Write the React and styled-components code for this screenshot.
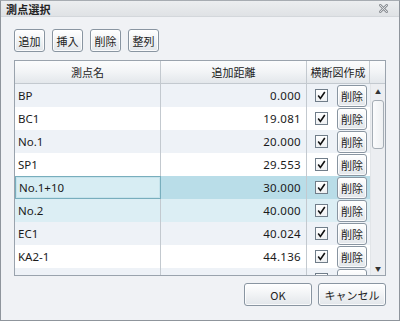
import React from 'react';
import styled, { createGlobalStyle } from 'styled-components';

const rows = [
  { name: 'BP', dist: '0.000' },
  { name: 'BC1', dist: '19.081' },
  { name: 'No.1', dist: '20.000' },
  { name: 'SP1', dist: '29.553' },
  { name: 'No.1+10', dist: '30.000', state: 'selected' },
  { name: 'No.2', dist: '40.000', state: 'hover' },
  { name: 'EC1', dist: '40.024' },
  { name: 'KA2-1', dist: '44.136' },
  { name: 'KE2-1', dist: '49.136' },
];

const GlobalStyle = createGlobalStyle`
  html, body { margin: 0; padding: 0; background: #fff; }
  * { box-sizing: border-box; }
  body {
    font-family: "Noto Sans CJK JP", "Noto Sans", sans-serif;
    font-size: 11px;
    color: #1a1a1a;
  }
`;

const CloseIcon = () => (
  <svg width='9' height='9' viewBox='0 0 9 9'>
    <path d='M1 1 L8 8 M8 1 L1 8' stroke='#8e9297' strokeWidth='2.6' strokeLinecap='square' />
    <path d='M1 1 L8 8 M8 1 L1 8' stroke='#e6e8eb' strokeWidth='0.9' strokeLinecap='square' />
  </svg>
);

const Check = () => (
  <svg width='11' height='11' viewBox='0 0 11 11'>
    <path d='M2.2 5.6 L4.4 8.4 L8.8 2' fill='none' stroke='#111' strokeWidth='1.6' />
  </svg>
);

const App = () => {
  return (
    <>
      <GlobalStyle />
      <Window>
        <TitleBar>
          <span className='title'>測点選択</span>
          <CloseIcon />
        </TitleBar>
        <Body>
          <Toolbar>
            <SmallButton>追加</SmallButton>
            <SmallButton>挿入</SmallButton>
            <SmallButton>削除</SmallButton>
            <SmallButton>整列</SmallButton>
          </Toolbar>

          <Grid>
            <HeaderRow>
              <HeaderCell>測点名</HeaderCell>
              <HeaderCell>追加距離</HeaderCell>
              <HeaderCell>横断図作成</HeaderCell>
              <HeaderCell $last />
            </HeaderRow>
            <GridBody>
              <Rows>
                {rows.map((r, i) => (
                  <Row key={r.name} $odd={i % 2 === 0} $state={r.state}>
                    <NameCell $focus={r.state === 'selected'}>{r.name}</NameCell>
                    <DistCell>{r.dist}</DistCell>
                    <ActionCell>
                      <CheckBox>
                        <Check />
                      </CheckBox>
                      <RowButton>削除</RowButton>
                    </ActionCell>
                  </Row>
                ))}
              </Rows>
              <ScrollBar>
                <Arrow>▲</Arrow>
                <Track>
                  <Thumb />
                </Track>
                <Arrow>▼</Arrow>
              </ScrollBar>
            </GridBody>
          </Grid>

          <Footer>
            <DialogButton>OK</DialogButton>
            <DialogButton>キャンセル</DialogButton>
          </Footer>
        </Body>
      </Window>
    </>
  );
};

export default App;

const Window = styled.div`
  display: flex;
  flex-direction: column;
  width: 400px;
  height: 321px;
  border: 1px solid #8f959c;
  border-top-color: #a7acb2;
  background: #f0f2f5;
`;

const TitleBar = styled.div`
  display: flex;
  align-items: center;
  justify-content: space-between;
  height: 16px;
  padding: 0 11px 0 5px;
  background: linear-gradient(#eceef0, #dfe2e5);
  border-bottom: 1px solid #d3d7db;
  .title {
    font-weight: 700;
    font-size: 11px;
    color: #222;
    letter-spacing: 0.2px;
  }
`;

const Body = styled.div`
  flex: 1;
  display: flex;
  flex-direction: column;
  padding: 12px 13px 0 13px;
`;

const Toolbar = styled.div`
  display: flex;
  gap: 7px;
`;

const buttonBase = `
  display: flex;
  align-items: center;
  justify-content: center;
  border: 1px solid #8995a1;
  border-radius: 3px;
  background: linear-gradient(#ffffff, #f1f3f5 50%, #e2e6ea);
  color: #222;
  font-family: "Noto Sans CJK JP", "Noto Sans", sans-serif;
  font-size: 11px;
  padding: 0;
  box-shadow: inset 0 0 0 1px rgba(255, 255, 255, 0.8);
`;

const SmallButton = styled.button`
  ${buttonBase}
  width: 31px;
  height: 23px;
`;

const Grid = styled.div`
  display: flex;
  flex-direction: column;
  margin-top: 8px;
  width: 372px;
  height: 216px;
  border: 1px solid #9aa3ad;
  background: #fff;
  overflow: hidden;
`;

const HeaderRow = styled.div`
  display: grid;
  grid-template-columns: 146px 146px 63px 15px;
  height: 23px;
  border-bottom: 1px solid #c3c9cf;
  background: linear-gradient(#fbfcfd, #f2f4f6 50%, #e3e7eb);
`;

const HeaderCell = styled.div`
  display: flex;
  align-items: center;
  justify-content: center;
  border-right: ${(p) => (p.$last ? 'none' : '1px solid #c3c9cf')};
  color: #222;
`;

const GridBody = styled.div`
  flex: 1;
  display: flex;
  min-height: 0;
`;

const Rows = styled.div`
  flex: 1;
  overflow: hidden;
`;

const rowBg = (p) => {
  if (p.$state === 'selected') return '#b9dde8';
  if (p.$state === 'hover') return '#dceef4';
  return p.$odd ? '#eef2f7' : '#ffffff';
};

const Row = styled.div`
  display: grid;
  grid-template-columns: 146px 146px 63px;
  height: 23px;
  background: ${rowBg};
`;

const NameCell = styled.div`
  display: flex;
  align-items: center;
  padding-left: 3px;
  border-right: 1px solid #c3c9cf;
  font-family: "Noto Sans", sans-serif;
  font-size: 11.5px;
  ${(p) =>
    p.$focus &&
    `
    background: #d7edf3;
    border: 1px solid #78aebd;
    box-shadow: inset 0 0 0 1px #c6e3eb;
  `}
`;

const DistCell = styled.div`
  display: flex;
  align-items: center;
  justify-content: flex-end;
  padding-right: 5px;
  border-right: 1px solid #c3c9cf;
  font-family: "Noto Sans", sans-serif;
  font-size: 11.5px;
  letter-spacing: 0.3px;
`;

const ActionCell = styled.div`
  display: flex;
  align-items: center;
  padding-left: 8px;
`;

const CheckBox = styled.div`
  display: flex;
  align-items: center;
  justify-content: center;
  width: 13px;
  height: 13px;
  border: 1px solid #707d89;
  background: linear-gradient(#ffffff, #eef0f2);
`;

const RowButton = styled.button`
  ${buttonBase}
  margin-left: 9px;
  width: 30px;
  height: 22px;
`;

const ScrollBar = styled.div`
  display: flex;
  flex-direction: column;
  align-items: center;
  width: 15px;
  background: #eceef1;
  border-left: 1px solid #e2e5e8;
`;

const Arrow = styled.div`
  height: 14px;
  display: flex;
  align-items: center;
  justify-content: center;
  font-size: 6px;
  color: #333;
`;

const Track = styled.div`
  flex: 1;
  width: 100%;
  padding: 0 1px;
`;

const Thumb = styled.div`
  height: 49px;
  margin-top: 2px;
  border: 1px solid #a5adb5;
  border-radius: 3px;
  background: linear-gradient(90deg, #fbfcfd, #eef0f2);
`;

const Footer = styled.div`
  display: flex;
  justify-content: flex-end;
  gap: 6px;
  margin-top: 7px;
`;

const DialogButton = styled.button`
  ${buttonBase}
  width: 68px;
  height: 23px;
`;
